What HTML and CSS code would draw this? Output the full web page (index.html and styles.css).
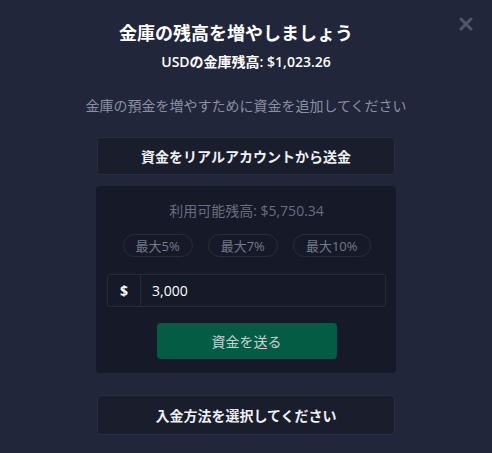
FILE: index.html
```html
<!DOCTYPE html>
<html lang="ja">
<head>
    <meta charset="UTF-8">
    <meta name="viewport" content="width=device-width, initial-scale=1.0">
    <title>金庫の残高を増やしましょう</title>
    <link rel="stylesheet" href="styles.css">
</head>
<body>
    <!-- Vault Top-up Modal -->
    <div class="modal">
        <button class="close-btn" aria-label="閉じる">
            <svg width="14" height="14" viewBox="0 0 14 14">
                <path d="M2 2 L12 12 M12 2 L2 12" stroke="currentColor" stroke-width="3" stroke-linecap="round"/>
            </svg>
        </button>

        <h1 class="title">金庫の残高を増やしましょう</h1>
        <p class="vault-balance">USDの金庫残高: $1,023.26</p>
        <p class="hint">金庫の預金を増やすために資金を追加してください</p>

        <button class="option-btn">資金をリアルアカウントから送金</button>

        <div class="panel">
            <p class="available">利用可能残高: $5,750.34</p>
            <div class="chips">
                <button class="chip">最大5%</button>
                <button class="chip">最大7%</button>
                <button class="chip">最大10%</button>
            </div>
            <div class="amount">
                <span class="currency">$</span>
                <span class="value">3,000</span>
            </div>
            <button class="send-btn">資金を送る</button>
        </div>

        <button class="option-btn option-btn-tall">入金方法を選択してください</button>
    </div>
</body>
</html>
```

FILE: styles.css
```css
/* Global Styles */
body {
    margin: 0;
    padding: 0;
    background: #22263a;
    font-family: "Open Sans", "Noto Sans CJK JP", sans-serif;
    color: #ffffff;
}

.modal {
    position: relative;
    width: 492px;
    height: 453px;
    box-sizing: border-box;
    padding-top: 21px;
    display: flex;
    flex-direction: column;
    align-items: center;
    background: #22263a;
}

.close-btn {
    position: absolute;
    top: 17px;
    right: 19px;
    padding: 0;
    border: none;
    background: none;
    color: #4e5669;
    display: flex;
}

.title {
    margin: 0 20px 0 0;
    font-size: 18px;
    line-height: 24px;
    font-weight: 700;
}

.vault-balance {
    margin: 7px 0 0;
    font-size: 14px;
    line-height: 20px;
    font-weight: 600;
}

.hint {
    margin: 24px 0 0;
    font-size: 14px;
    line-height: 20px;
    color: #8891a4;
}

/* Buttons */
button {
    font-family: inherit;
    cursor: pointer;
}

.option-btn {
    margin-top: 21px;
    width: 298px;
    height: 38px;
    background: #1a1d2c;
    border: 1px solid #2a2e40;
    border-radius: 4px;
    color: #eef0f4;
    font-size: 14px;
    font-weight: 700;
}

.option-btn-tall {
    margin-top: 22px;
    height: 40px;
}

/* Transfer Panel */
.panel {
    margin-top: 11px;
    width: 300px;
    box-sizing: border-box;
    padding: 15px 10px 14px 11px;
    background: #161927;
    border-radius: 4px;
    display: flex;
    flex-direction: column;
    align-items: center;
}

.available {
    margin: 0;
    font-size: 14px;
    line-height: 20px;
    color: #666e80;
}

.chips {
    margin-top: 13px;
    display: flex;
    gap: 15px;
}

.chip {
    height: 23px;
    padding: 0 12px;
    background: none;
    border: 1px solid #282c3d;
    border-radius: 12px;
    color: #737b8d;
    font-size: 13px;
}

.amount {
    margin-top: 17px;
    align-self: stretch;
    height: 33px;
    box-sizing: border-box;
    display: flex;
    border: 1px solid #262a3b;
    border-radius: 3px;
}

.currency {
    width: 32px;
    display: flex;
    align-items: center;
    justify-content: center;
    border-right: 1px solid #262a3b;
    font-size: 14px;
    font-weight: 700;
}

.value {
    display: flex;
    align-items: center;
    padding-left: 11px;
    font-size: 14px;
}

.send-btn {
    margin-top: 16px;
    width: 180px;
    height: 36px;
    border: none;
    border-radius: 4px;
    background: #045c45;
    color: #c9d3d6;
    font-size: 14px;
}
```
